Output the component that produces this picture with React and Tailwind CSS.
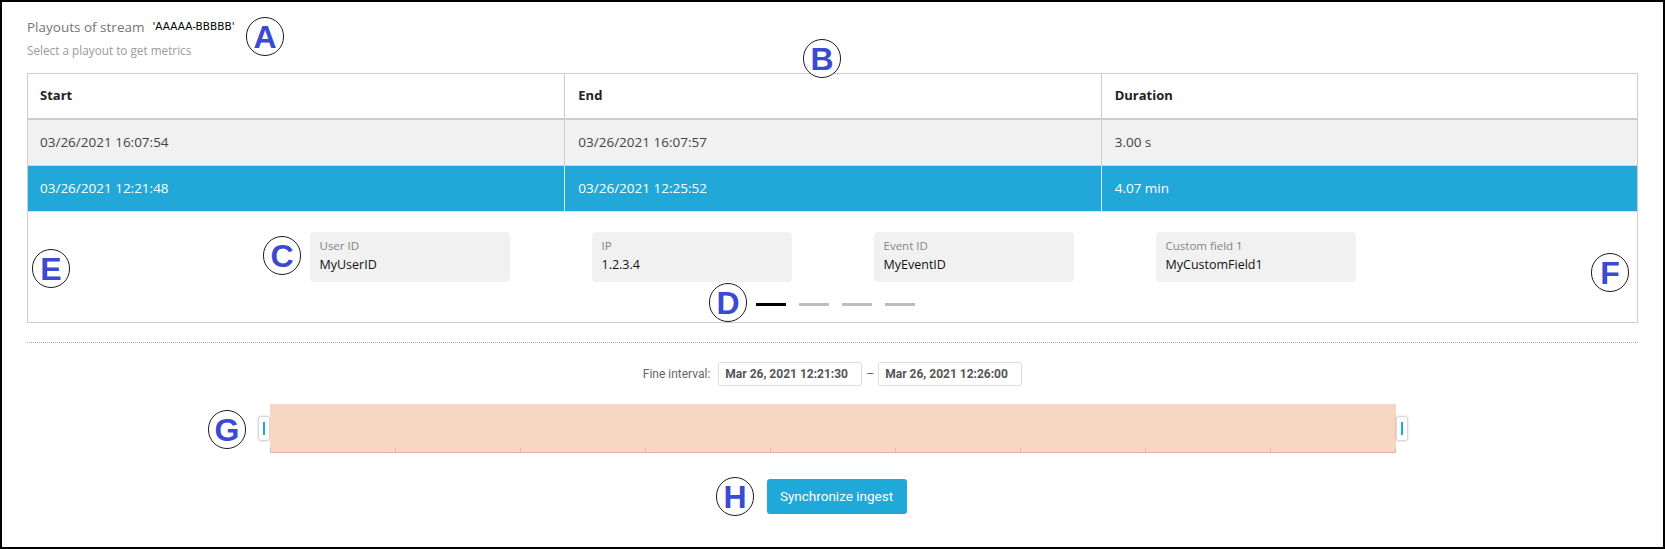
import React from "react";

const rows = [
  { start: "03/26/2021 16:07:54", end: "03/26/2021 16:07:57", duration: "3.00 s", selected: false },
  { start: "03/26/2021 12:21:48", end: "03/26/2021 12:25:52", duration: "4.07 min", selected: true },
];

const fields = [
  { label: "User ID", value: "MyUserID" },
  { label: "IP", value: "1.2.3.4" },
  { label: "Event ID", value: "MyEventID" },
  { label: "Custom field 1", value: "MyCustomField1" },
];

function Marker({ letter, pos }) {
  return (
    <div
      className={`absolute ${pos} flex h-[39px] w-[38px] items-center justify-center rounded-full border-[1.5px] border-[#1c1c1c] bg-white font-['Liberation_Sans',sans-serif] text-[32px] font-bold leading-none text-[#3b4ad2]`}
    >
      {letter}
    </div>
  );
}

function Handle() {
  return (
    <div className="flex h-[25px] w-[12px] items-center justify-center rounded-[3px] border border-[#d6d6d6] bg-white shadow-[0_0_3px_rgba(0,0,0,0.15)]">
      <div className="h-[13px] w-[2px] bg-[#20a8d8]" />
    </div>
  );
}

export default function App() {
  return (
    <div className="relative h-[549px] w-[1665px] overflow-hidden border-2 border-black bg-white px-[25px] font-['Open_Sans',sans-serif]">
      {/* header */}
      <div className="mt-[15px] flex h-[20px] items-center">
        <span className="text-[13.5px] text-[#757575]">Playouts of stream</span>
        <span className="ml-[8px] font-['DejaVu_Sans',sans-serif] text-[10.5px] text-black">'AAAAA-BBBBB'</span>
      </div>
      <div className="mt-[5px] h-[16px] text-[11.75px] leading-[16px] text-[#9a9a9a]">
        Select a playout to get metrics
      </div>

      {/* table */}
      <div className="mt-[15px] border border-[#cacdd1]">
        <div className="grid h-[46px] grid-cols-3 border-b-2 border-[#cacdd1] text-[13px] font-bold text-[#222]">
          <div className="flex items-center px-[12px]">Start</div>
          <div className="flex items-center border-l border-[#cacdd1] px-[13px]">End</div>
          <div className="flex items-center border-l border-[#cacdd1] px-[13px]">Duration</div>
        </div>
        {rows.map((r) => (
          <div
            key={r.start}
            className={`grid h-[46px] grid-cols-3 border-b text-[13.5px] ${
              r.selected
                ? "border-[#dfe3e6] bg-[#21a8d8] text-white"
                : "border-[#d2d5d8] bg-[#f1f1f1] text-[#444]"
            }`}
          >
            <div className="flex items-center px-[12px]">{r.start}</div>
            <div className={`flex items-center border-l px-[13px] ${r.selected ? "border-[#d6eef8]" : "border-[#cacdd1]"}`}>{r.end}</div>
            <div className={`flex items-center border-l px-[13px] ${r.selected ? "border-[#d6eef8]" : "border-[#cacdd1]"}`}>{r.duration}</div>
          </div>
        ))}

        {/* detail panel */}
        <div className="pt-[20px] pb-[16px]">
          <div className="flex justify-center gap-[82px]">
            {fields.map((f) => (
              <div key={f.label} className="h-[50px] w-[200px] rounded-[4px] bg-[#f1f1f1] px-[10px] pt-[5px]">
                <div className="h-[18px] text-[11.5px] leading-[18px] text-[#858585]">{f.label}</div>
                <div className="h-[20px] text-[12.5px] leading-[20px] text-[#111]">{f.value}</div>
              </div>
            ))}
          </div>
          <div className="mt-[21px] flex justify-center gap-[13px] pl-[6px]">
            <div className="h-[3px] w-[30px] bg-black" />
            <div className="h-[3px] w-[30px] bg-[#bdbdbd]" />
            <div className="h-[3px] w-[30px] bg-[#bdbdbd]" />
            <div className="h-[3px] w-[30px] bg-[#bdbdbd]" />
          </div>
        </div>
      </div>

      {/* separator */}
      <div className="mt-[19px] border-t border-dotted border-[#a8a8a8]" />

      {/* fine interval */}
      <div className="mt-[19px] flex items-center justify-center font-['Roboto',sans-serif] text-[12px]">
        <span className="mr-[8px] text-[#666]">Fine interval:</span>
        <div className="flex h-[24px] w-[144px] items-center rounded-[3px] border border-[#dedede] px-[6px] font-bold text-[#555]">
          Mar 26, 2021 12:21:30
        </div>
        <span className="mx-[4px] text-[#666]">–</span>
        <div className="flex h-[24px] w-[144px] items-center rounded-[3px] border border-[#dedede] px-[6px] font-bold text-[#555]">
          Mar 26, 2021 12:26:00
        </div>
      </div>

      {/* slider */}
      <div className="mt-[18px] flex items-center justify-center">
        <Handle />
        <div className="flex h-[49px] w-[1126px] items-end border-b-[1.5px] border-[#e0b59b] bg-[#f7d7c3]">
          {Array.from({ length: 9 }).map((_, i) => (
            <div
              key={i}
              className={`h-[4px] flex-1 border-r border-[#c9c2bd] ${i === 0 ? "border-l" : ""}`}
            />
          ))}
        </div>
        <Handle />
      </div>

      {/* action */}
      <div className="mt-[26px] flex justify-center pl-[8px]">
        <button className="h-[35px] w-[140px] rounded-[3px] bg-[#20a8d8] font-['Roboto',sans-serif] text-[13.5px] text-white">
          Synchronize ingest
        </button>
      </div>

      {/* annotation markers */}
      <Marker letter="A" pos="left-[244px] top-[15px]" />
      <Marker letter="B" pos="left-[801px] top-[37px]" />
      <Marker letter="C" pos="left-[261px] top-[234px]" />
      <Marker letter="D" pos="left-[707px] top-[281px]" />
      <Marker letter="E" pos="left-[30px] top-[247px]" />
      <Marker letter="F" pos="left-[1589px] top-[251px]" />
      <Marker letter="G" pos="left-[206px] top-[408px]" />
      <Marker letter="H" pos="left-[714px] top-[475px]" />
    </div>
  );
}
